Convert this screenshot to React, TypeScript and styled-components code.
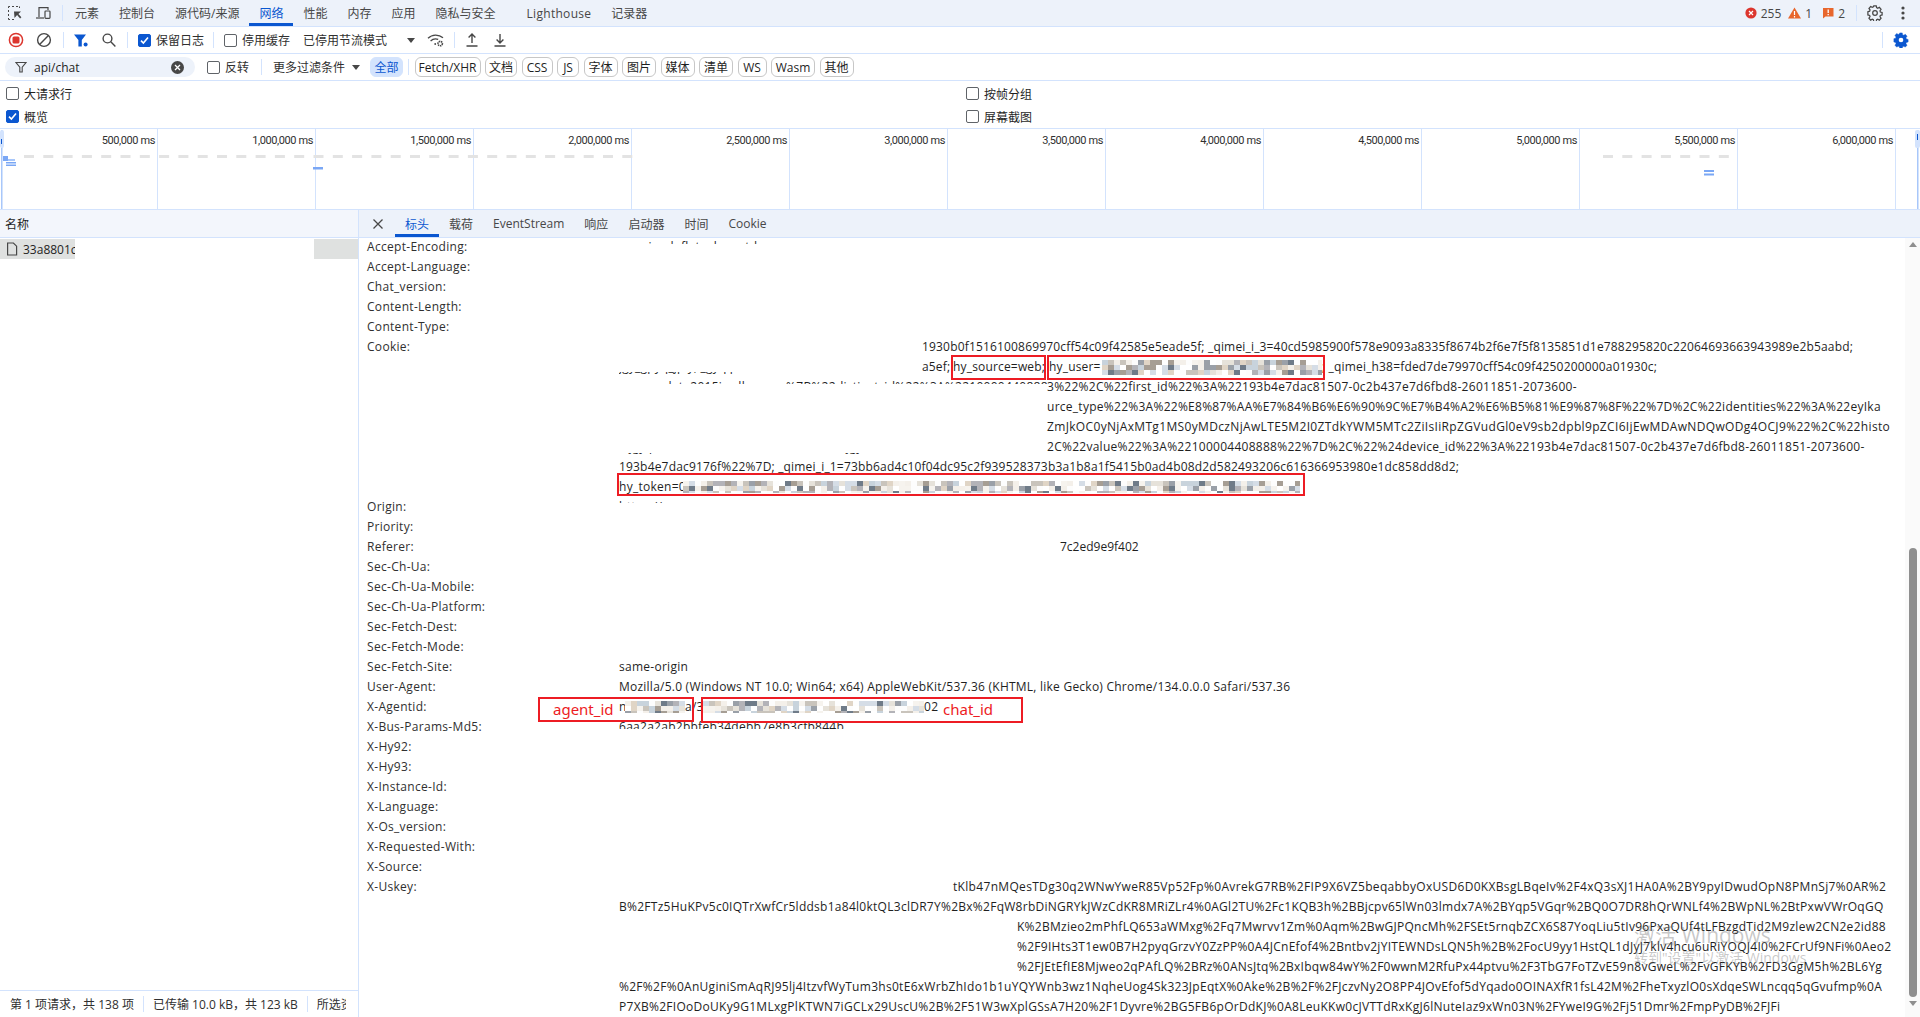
import React from "react";
import styled, { createGlobalStyle } from "styled-components";

const GlobalStyle = createGlobalStyle`
  html, body, #root { margin: 0; padding: 0; height: 100%; overflow: hidden; background: #fff; }
  body { font-family: "Open Sans", "Noto Sans CJK SC", sans-serif; font-size: 12px; color: #1f1f1f; }
`;

const BORDER = "#d3e3fd";
const BAR = "#edf2fa";

const Page = styled.div`
  position: relative;
  height: 1017px;
  display: flex;
  flex-direction: column;
  overflow: hidden;
`;

/* top tab strip */
const MainTabs = styled.div`
  height: 26px;
  flex: none;
  display: flex;
  align-items: stretch;
  background: ${BAR};
  border-bottom: 1px solid ${BORDER};
  padding-left: 1px;
`;
const MainTab = styled.div<{ $active?: boolean; $gap?: number; $ls?: number }>`
  display: flex;
  align-items: center;
  padding: 0 10px;
  margin-left: ${(p) => p.$gap || 0}px;
  letter-spacing: ${(p) => p.$ls || 0}px;
  color: ${(p) => (p.$active ? "#0b57d0" : "#474747")};
  box-shadow: ${(p) => (p.$active ? "inset 0 -3px 0 #0b57d0" : "none")};
  white-space: nowrap;
`;
const IconBtn = styled.div<{ $w?: number; $l?: number }>`
  width: ${(p) => p.$w || 28}px;
  margin-left: ${(p) => p.$l || 0}px;
  flex: none;
  display: flex;
  align-items: center;
  justify-content: center;
`;
const Sep = styled.div<{ $l?: number; $r?: number; $h?: number }>`
  width: 1px;
  height: ${(p) => p.$h || 16}px;
  background: ${BORDER};
  align-self: center;
  flex: none;
  margin-left: ${(p) => p.$l || 0}px;
  margin-right: ${(p) => p.$r || 0}px;
`;
const Spacer = styled.div`
  flex: 1;
`;
const Count = styled.span<{ $l: number }>`
  display: flex;
  align-items: center;
  margin-left: ${(p) => p.$l}px;
  gap: 4px;
  color: #474747;
`;

/* network toolbars */
const ToolRow = styled.div<{ $pad?: number }>`
  height: 26px;
  flex: none;
  display: flex;
  align-items: center;
  border-bottom: 1px solid ${BORDER};
  padding-left: ${(p) => p.$pad || 0}px;
  white-space: nowrap;
`;
const Check = styled.span<{ $on?: boolean; $l?: number }>`
  width: 11px;
  height: 11px;
  flex: none;
  display: inline-flex;
  align-items: center;
  justify-content: center;
  border-radius: 2px;
  margin-left: ${(p) => p.$l || 0}px;
  margin-right: 5px;
  border: 1px solid ${(p) => (p.$on ? "#0b57d0" : "#5f6368")};
  background: ${(p) => (p.$on ? "#0b57d0" : "#fff")};
`;
const ToolText = styled.span<{ $l?: number }>`
  margin-left: ${(p) => p.$l || 0}px;
  color: #303030;
`;
const Caret = styled.span<{ $l: number }>`
  width: 0;
  height: 0;
  margin-left: ${(p) => p.$l}px;
  border-left: 4px solid transparent;
  border-right: 4px solid transparent;
  border-top: 5px solid #474747;
  flex: none;
`;
const FilterBox = styled.div`
  width: 190px;
  height: 20px;
  flex: none;
  display: flex;
  align-items: center;
  border-radius: 10px;
  background: ${BAR};
  padding-left: 10px;
  box-sizing: border-box;
`;
const FilterValue = styled.span`
  margin-left: 7px;
  flex: 1;
  color: #1f1f1f;
`;
const ClearDot = styled.span`
  width: 13px;
  height: 13px;
  border-radius: 50%;
  background: #474747;
  display: flex;
  align-items: center;
  justify-content: center;
  margin-right: 11px;
`;
const Chip = styled.div<{ $on?: boolean; $w: number; $l?: number }>`
  width: ${(p) => p.$w}px;
  height: 20px;
  flex: none;
  box-sizing: border-box;
  margin-left: ${(p) => p.$l ?? 4.5}px;
  display: flex;
  align-items: center;
  justify-content: center;
  border-radius: 6px;
  border: 1px solid ${(p) => (p.$on ? "#d3e3fd" : "#c7c7c7")};
  background: ${(p) => (p.$on ? "#d3e3fd" : "#fff")};
  color: ${(p) => (p.$on ? "#0b57d0" : "#1f1f1f")};
`;

/* options */
const Options = styled.div`
  height: 48px;
  flex: none;
  box-sizing: border-box;
  display: grid;
  grid-template-columns: 960px 1fr;
  grid-auto-rows: 23px;
  align-items: center;
  padding: 1px 0 0 6px;
  border-bottom: 1px solid ${BORDER};
`;
const Option = styled.label`
  display: flex;
  align-items: center;
  color: #1f1f1f;
`;

/* overview chart */
const Overview = styled.div`
  position: relative;
  height: 80px;
  flex: none;
  display: flex;
  border-bottom: 1px solid ${BORDER};
  overflow: hidden;
`;
const Tick = styled.div`
  width: 158px;
  flex: none;
  box-sizing: border-box;
  border-right: 1px solid ${BORDER};
  text-align: right;
  padding: 5px 2px 0 0;
  font-family: Roboto, sans-serif;
  font-size: 11px;
  letter-spacing: -0.4px;
  line-height: 14px;
  color: #303030;
  white-space: nowrap;
`;
const OverviewDraw = styled.svg`
  position: absolute;
  left: 0;
  top: 0;
`;

/* split */
const Split = styled.div`
  flex: 1;
  min-height: 0;
  display: flex;
`;
const LeftPane = styled.div`
  width: 358px;
  flex: none;
  display: flex;
  flex-direction: column;
  border-right: 1px solid ${BORDER};
`;
const NameHead = styled.div`
  height: 27px;
  flex: none;
  display: flex;
  align-items: center;
  padding-left: 5px;
  background: #f3f6fc;
  border-bottom: 1px solid ${BORDER};
  color: #1f1f1f;
`;
const RequestList = styled.div`
  flex: 1;
  padding-top: 1px;
`;
const RequestRow = styled.div`
  height: 20px;
  display: flex;
`;
const RequestName = styled.div`
  width: 75px;
  background: #dfe1e0;
  display: flex;
  align-items: center;
  padding-left: 6px;
  box-sizing: border-box;
  overflow: hidden;
  white-space: nowrap;
  gap: 5px;
`;
const RedactedGap = styled.div`
  width: 239px;
  background: #fff;
`;
const RowRest = styled.div`
  flex: 1;
  background: #dfe1e0;
`;
const StatusBar = styled.div`
  height: 26px;
  flex: none;
  display: flex;
  align-items: center;
  border-top: 1px solid ${BORDER};
  padding-left: 10px;
  white-space: nowrap;
  overflow: hidden;
  color: #303030;
`;
const StatusClip = styled.span`
  width: 29px;
  overflow: hidden;
  flex: none;
`;

const RightPane = styled.div`
  flex: 1;
  min-width: 0;
  display: flex;
  flex-direction: column;
`;
const DetailTabs = styled.div`
  height: 27px;
  flex: none;
  display: flex;
  align-items: stretch;
  background: ${BAR};
  border-bottom: 1px solid ${BORDER};
  padding-left: 5px;
`;
const DetailClose = styled(IconBtn)`
  margin-right: 3px;
`;
const DetailBody = styled.div`
  flex: 1;
  min-height: 0;
  display: flex;
`;
const HeaderList = styled.div`
  position: relative;
  flex: 1;
  min-width: 0;
  margin-top: -1px;
  overflow: hidden;
  padding-left: 8px;
`;
const HeaderRow = styled.div`
  display: flex;
`;
const HeaderName = styled.div`
  width: 252px;
  flex: none;
  line-height: 20px;
  letter-spacing: 0.3px;
  color: #303030;
`;
const HeaderValue = styled.div`
  flex: 1;
  min-width: 0;
`;
const ValueLine = styled.div<{ $indent?: number; $ls?: number }>`
  height: 20px;
  line-height: 20px;
  display: flex;
  align-items: center;
  padding-left: ${(p) => p.$indent || 0}px;
  letter-spacing: ${(p) => p.$ls ?? 0.27}px;
  white-space: pre;
  color: #1f1f1f;
`;
const Seg = styled.span<{ $w: number }>`
  width: ${(p) => p.$w}px;
  flex: none;
  overflow: hidden;
`;
// text mostly hidden under the white redaction, only a sliver of it shows
const Sliver = styled.span<{ $w?: number; $top?: number; $bottom?: number }>`
  ${(p) => (p.$w ? `width: ${p.$w}px; flex: none; overflow: hidden;` : "")}
  height: 20px;
  clip-path: inset(${(p) => p.$top || 0}px 0 ${(p) => p.$bottom || 0}px 0);
`;
const MosaicSvg = styled.svg`
  flex: none;
  display: block;
`;

const RedBox = styled.div<{ $x: number; $y: number; $w: number; $h: number }>`
  position: absolute;
  left: ${(p) => p.$x}px;
  top: ${(p) => p.$y}px;
  width: ${(p) => p.$w}px;
  height: ${(p) => p.$h}px;
  box-sizing: border-box;
  border: 2px solid #ed1c24;
`;
const RedNote = styled.span<{ $x: number }>`
  position: absolute;
  left: ${(p) => p.$x}px;
  top: 0;
  font-size: 15px;
  line-height: 21px;
  color: #ed1c24;
  font-family: "Noto Sans", sans-serif;
`;

const ScrollTrack = styled.div`
  width: 15px;
  flex: none;
  background: #fafafa;
  display: flex;
  flex-direction: column;
  align-items: center;
  padding-top: 4px;
  box-sizing: border-box;
`;
const ArrowUp = styled.div`
  width: 0;
  height: 0;
  flex: none;
  border-left: 4px solid transparent;
  border-right: 4px solid transparent;
  border-bottom: 5px solid #8f8f8f;
`;
const ArrowDown = styled(ArrowUp)`
  border-bottom: 0;
  border-top: 5px solid #8f8f8f;
  margin-top: 4px;
`;
const Thumb = styled.div`
  width: 8px;
  height: 449px;
  flex: none;
  margin-top: 301px;
  border-radius: 4px;
  background: #8f8f8f;
`;

const Watermark = styled.div`
  position: absolute;
  left: 1634px;
  top: 922px;
  color: rgba(110, 110, 110, 0.38);
  pointer-events: none;
  white-space: nowrap;
`;
const WatermarkTitle = styled.div`
  font-size: 21px;
  line-height: 26px;
`;
const WatermarkSub = styled.div`
  font-size: 14px;
  line-height: 20px;
`;

const InspectIcon = () => (
  <svg width="16" height="16" viewBox="0 0 16 16" fill="none" stroke="#474747">
    <path d="M1.500 3V1.500H3M5 1.500h2M9 1.500h2M12.500 1.500v1.500M1.500 5v2M1.500 9v2M1.500 13v1.500H3M5 14.500h2" />
    <path d="M7 6.500l7 0-2.600 2.400 3 3.400-1.300 1.200-3-3.400L7.500 13z" fill="#474747" stroke="none" />
  </svg>
);
const DeviceIcon = () => (
  <svg width="16" height="16" viewBox="0 0 16 16" fill="none" stroke="#474747" strokeWidth="1.200">
    <path d="M4 12V2.600h9V5" />
    <path d="M1 13h8" />
    <rect x="10" y="6" width="5" height="7.400" rx="0.800" />
  </svg>
);
const RecordIcon = () => (
  <svg width="16" height="16" viewBox="0 0 16 16">
    <circle cx="8" cy="8" r="6.600" fill="none" stroke="#dc362e" strokeWidth="1.500" />
    <rect x="4.500" y="4.500" width="7" height="7" rx="1.500" fill="#dc362e" />
  </svg>
);
const ClearIcon = () => (
  <svg width="16" height="16" viewBox="0 0 16 16" fill="none" stroke="#474747" strokeWidth="1.400">
    <circle cx="8" cy="8" r="6.400" />
    <path d="M3.600 12.600l8.800-9.200" />
  </svg>
);
const FunnelIcon = () => (
  <svg width="16" height="16" viewBox="0 0 16 16">
    <path d="M1 2.500h12L8.800 8v6.500h-3.400V8z" fill="#0b57d0" />
    <circle cx="12.600" cy="12.600" r="2" fill="#0b57d0" />
  </svg>
);
const SearchIcon = () => (
  <svg width="16" height="16" viewBox="0 0 16 16" fill="none" stroke="#474747" strokeWidth="1.400">
    <circle cx="6.500" cy="6.500" r="4.400" />
    <path d="M9.800 9.800l4.600 4.800" />
  </svg>
);
const WifiGearIcon = () => (
  <svg width="18" height="16" viewBox="0 0 18 16" fill="none" stroke="#474747" strokeWidth="1.300">
    <path d="M1 6.200a11 11 0 0 1 15-.4M3.600 9a7.200 7.200 0 0 1 7.600-1.600" />
    <circle cx="8.200" cy="12" r="0.900" fill="#474747" stroke="none" />
    <circle cx="13.200" cy="11.600" r="2.200" strokeWidth="1.600" strokeDasharray="1.400 0.600" />
  </svg>
);
const UploadIcon = () => (
  <svg width="16" height="16" viewBox="0 0 16 16" fill="none" stroke="#474747" strokeWidth="1.400">
    <path d="M8 11V2.200M4.600 5.400L8 2l3.400 3.400M2.500 14h11" />
  </svg>
);
const DownloadIcon = () => (
  <svg width="16" height="16" viewBox="0 0 16 16" fill="none" stroke="#474747" strokeWidth="1.400">
    <path d="M8 2v8.800M4.600 7.600L8 11l3.400-3.400M2.500 14h11" />
  </svg>
);
const CloseIcon = () => (
  <svg width="12" height="12" viewBox="0 0 12 12" fill="none" stroke="#474747" strokeWidth="1.300">
    <path d="M1.500 1.500l9 9M10.500 1.500l-9 9" />
  </svg>
);
const GEAR =
  "M6.600 1h2.800l.4 2 1.300.6 1.800-1 1.900 2.200-1.200 1.700.4 1.400 2 .5v2.800l-2 .5-.4 1.400 1.200 1.700-1.900 2.200-1.800-1-1.300.6-.4 2H6.600l-.4-2-1.300-.6-1.800 1-1.900-2.200 1.200-1.700-.4-1.400-2-.5V7.500l2-.5.4-1.400L1.200 3.900l1.900-2.200 1.800 1 1.300-.6z";
const GearIcon = ({ color, solid }: { color: string; solid?: boolean }) => (
  <svg width="16" height="16" viewBox="-1 0 18 18">
    <path d={GEAR} fill={solid ? color : "none"} stroke={color} strokeWidth={solid ? 0.5 : 1.4} />
    <circle cx="8" cy="9" r="2.600" fill={solid ? "#fff" : "none"} stroke={solid ? "none" : color} strokeWidth="1.400" />
  </svg>
);
const DotsIcon = () => (
  <svg width="4" height="14" viewBox="0 0 4 14" fill="#474747">
    <circle cx="2" cy="2" r="1.600" />
    <circle cx="2" cy="7" r="1.600" />
    <circle cx="2" cy="12" r="1.600" />
  </svg>
);
const ErrorIcon = () => (
  <svg width="12" height="12" viewBox="0 0 12 12">
    <circle cx="6" cy="6" r="5.600" fill="#dc362e" />
    <path d="M4 4l4 4M8 4l-4 4" stroke="#fff" strokeWidth="1.200" />
  </svg>
);
const WarnIcon = () => (
  <svg width="13" height="12" viewBox="0 0 13 12">
    <path d="M6.500.5L13 11.500H0z" fill="#e8662c" />
    <path d="M6.500 4v4M6.500 9v1.400" stroke="#fff" strokeWidth="1.200" />
  </svg>
);
const IssueIcon = () => (
  <svg width="11" height="12" viewBox="0 0 11 12">
    <path d="M0 1h10.500v8.500H2.500L0 11.500z" fill="#e8662c" />
    <path d="M5.200 2.500v3.600M5.200 7v1.300" stroke="#fff" strokeWidth="1.300" />
  </svg>
);
const CheckMark = () => (
  <svg width="9" height="9" viewBox="0 0 9 9" fill="none" stroke="#fff" strokeWidth="1.600">
    <path d="M1 4.600l2.400 2.500L8 1.600" />
  </svg>
);
const FileIcon = () => (
  <svg width="12" height="14" viewBox="0 0 12 14" fill="none" stroke="#474747" strokeWidth="1.200" style={{ flex: "none" }}>
    <path d="M1.600 1h5.800L10.600 4.200V13H1.600z" />
  </svg>
);

// pixelated blur over the secret parts of the cookies
const MOSAIC = ["#ffffff", "#f6f3ee", "#ffffff", "#e6e2da", "#d5dde6", "#c9c4bc", "#fdfdfd", "#b3b3b8", "#e0d5c6", "#c8d3dc", "#a69e94", "#9aa0a8", "#f4f0ea", "#6f7b88"];
const Mosaic = ({ w, h, seed }: { w: number; h: number; seed: number }) => {
  const cells: React.ReactNode[] = [];
  for (let y = 0; y < h; y += 5) {
    for (let x = 0; x < w; x += 6) {
      const r = Math.sin(x * 12.9898 + y * 78.233 + seed) * 43758.5453;
      const i = Math.floor((r - Math.floor(r)) * MOSAIC.length);
      cells.push(<rect key={`${x}-${y}`} x={x} y={y} width="6" height="5" fill={MOSAIC[i]} />);
    }
  }
  return (
    <MosaicSvg width={w} height={h} viewBox={`0 0 ${w} ${h}`}>
      {cells}
    </MosaicSvg>
  );
};

const TICKS = ["500,000", "1,000,000", "1,500,000", "2,000,000", "2,500,000", "3,000,000", "3,500,000", "4,000,000", "4,500,000", "5,000,000", "5,500,000", "6,000,000", ""];

const CHIPS: [string, number][] = [
  ["Fetch/XHR", 66],
  ["文档", 32],
  ["CSS", 31],
  ["JS", 22],
  ["字体", 34],
  ["图片", 34],
  ["媒体", 34],
  ["清单", 34],
  ["WS", 29],
  ["Wasm", 44],
  ["其他", 34],
];

const dashes = (from: number, to: number) => {
  const out: React.ReactNode[] = [];
  for (let x = from; x < to; x += 19.3) {
    out.push(<rect key={x} x={x} y="155" width="10" height="3" fill="#e3e3e3" />);
  }
  return out;
};

const NAMES_TOP = ["Sec-Ch-Ua:", "Sec-Ch-Ua-Mobile:", "Sec-Ch-Ua-Platform:", "Sec-Fetch-Dest:", "Sec-Fetch-Mode:"];
const NAMES_BOTTOM = ["X-Hy92:", "X-Hy93:", "X-Instance-Id:", "X-Language:", "X-Os_version:", "X-Requested-With:", "X-Source:"];

const Row = ({ name, children }: { name: string; children?: React.ReactNode }) => (
  <HeaderRow>
    <HeaderName>{name}</HeaderName>
    <HeaderValue>{children || <ValueLine />}</HeaderValue>
  </HeaderRow>
);

export default function App() {
  return (
    <Page>
      <GlobalStyle />
      <MainTabs>
        <IconBtn><InspectIcon /></IconBtn>
        <IconBtn><DeviceIcon /></IconBtn>
        <Sep $l={5} $r={2} />
        <MainTab>元素</MainTab>
        <MainTab>控制台</MainTab>
        <MainTab>源代码/来源</MainTab>
        <MainTab $active>网络</MainTab>
        <MainTab>性能</MainTab>
        <MainTab>内存</MainTab>
        <MainTab>应用</MainTab>
        <MainTab>隐私与安全</MainTab>
        <MainTab $gap={11} $ls={0.3}>Lighthouse</MainTab>
        <MainTab>记录器</MainTab>
        <Spacer />
        <Count $l={0}><ErrorIcon />255</Count>
        <Count $l={7}><WarnIcon />1</Count>
        <Count $l={11}><IssueIcon />2</Count>
        <Sep $l={11} $r={7} />
        <IconBtn $w={22}><GearIcon color="#474747" /></IconBtn>
        <IconBtn $w={34}><DotsIcon /></IconBtn>
      </MainTabs>

      <ToolRow $pad={2}>
        <IconBtn><RecordIcon /></IconBtn>
        <IconBtn><ClearIcon /></IconBtn>
        <Sep $l={5} $r={3} />
        <IconBtn><FunnelIcon /></IconBtn>
        <IconBtn><SearchIcon /></IconBtn>
        <Sep $l={4} />
        <Check $on $l={10}><CheckMark /></Check>
        <ToolText>保留日志</ToolText>
        <Sep $l={9} />
        <Check $l={10} />
        <ToolText>停用缓存</ToolText>
        <ToolText $l={13}>已停用节流模式</ToolText>
        <Caret $l={20} />
        <IconBtn $w={24} $l={9}><WifiGearIcon /></IconBtn>
        <Sep $l={6} $r={3} />
        <IconBtn><UploadIcon /></IconBtn>
        <IconBtn><DownloadIcon /></IconBtn>
        <Spacer />
        <Sep $h={16} $r={6} />
        <IconBtn $w={24}><GearIcon color="#0b57d0" solid /></IconBtn>
        <IconBtn $w={7} />
      </ToolRow>

      <ToolRow $pad={5}>
        <FilterBox>
          <svg width="12" height="12" viewBox="0 0 12 12" fill="none" stroke="#474747" strokeWidth="1.100">
            <path d="M1 1.500h10L7.200 6.200v4.800H4.800V6.200z" />
          </svg>
          <FilterValue>api/chat</FilterValue>
          <ClearDot>
            <svg width="7" height="7" viewBox="0 0 7 7" stroke="#fff" strokeWidth="1.300">
              <path d="M1 1l5 5M6 1l-5 5" />
            </svg>
          </ClearDot>
        </FilterBox>
        <Check $l={12} />
        <ToolText>反转</ToolText>
        <Sep $l={12} />
        <ToolText $l={11}>更多过滤条件</ToolText>
        <Caret $l={7} />
        <Chip $on $w={33} $l={10}>全部</Chip>
        <Sep $l={5} $r={1} />
        {CHIPS.map(([label, w]) => (
          <Chip key={label} $w={w}>{label}</Chip>
        ))}
      </ToolRow>

      <Options>
        <Option><Check />大请求行</Option>
        <Option><Check />按帧分组</Option>
        <Option><Check $on><CheckMark /></Check>概览</Option>
        <Option><Check />屏幕截图</Option>
      </Options>

      <Overview>
        {TICKS.map((t) => (
          <Tick key={t}>{t && `${t} ms`}</Tick>
        ))}
        <OverviewDraw width="1920" height="80" viewBox="0 129 1920 80">
          {dashes(24, 628)}
          {dashes(1603, 1733)}
          <rect x="1" y="130" width="1.500" height="79" fill="#a8c7fa" />
          <rect x="1917" y="130" width="1.500" height="79" fill="#a8c7fa" />
          <rect x="0" y="130" width="4" height="18" rx="2" fill="#d3e3fd" />
          <rect x="1915" y="130" width="5" height="18" rx="2" fill="#d3e3fd" />
          <rect x="1" y="139" width="1" height="5" fill="#0b57d0" />
          <rect x="1917" y="134" width="1" height="6" fill="#0b57d0" />
          <rect x="3" y="156" width="5" height="5" fill="#7aa7f5" />
          <rect x="8" y="159" width="7" height="2" fill="#a8c7fa" />
          <rect x="6" y="162" width="10" height="1.500" fill="#7aa7f5" />
          <rect x="6" y="164.500" width="10" height="1.500" fill="#7aa7f5" />
          <rect x="313" y="167" width="10" height="2.500" fill="#7aa7f5" />
          <rect x="1704" y="170" width="10" height="2" fill="#7aa7f5" />
          <rect x="1704" y="173.500" width="10" height="2" fill="#7aa7f5" />
        </OverviewDraw>
      </Overview>

      <Split>
        <LeftPane>
          <NameHead>名称</NameHead>
          <RequestList>
            <RequestRow>
              <RequestName><FileIcon />33a8801c</RequestName>
              <RedactedGap />
              <RowRest />
            </RequestRow>
          </RequestList>
          <StatusBar>
            第 1 项请求，共 138 项
            <Sep $l={9} $r={9} />
            已传输 10.0 kB，共 123 kB
            <Sep $l={9} $r={9} />
            <StatusClip>所选资源</StatusClip>
          </StatusBar>
        </LeftPane>

        <RightPane>
          <DetailTabs>
            <DetailClose><CloseIcon /></DetailClose>
            <MainTab $active>标头</MainTab>
            <MainTab>载荷</MainTab>
            <MainTab>EventStream</MainTab>
            <MainTab>响应</MainTab>
            <MainTab>启动器</MainTab>
            <MainTab>时间</MainTab>
            <MainTab>Cookie</MainTab>
          </DetailTabs>
          <DetailBody>
            <HeaderList>
              <Row name="Accept-Encoding:">
                <ValueLine><Sliver $bottom={13}>{"     gzip, deflate, br, zstd"}</Sliver></ValueLine>
              </Row>
              <Row name="Accept-Language:" />
              <Row name="Chat_version:" />
              <Row name="Content-Length:" />
              <Row name="Content-Type:" />
              <Row name="Cookie:">
                <ValueLine $indent={303} $ls={0.17}>1930b0f1516100869970cff54c09f42585e5eade5f; _qimei_i_3=40cd5985900f578e9093a8335f8674b2f6e7f5f8135851d1e788295820c22064693663943989e2b5aabd;</ValueLine>
                <ValueLine $ls={0.17}>
                  <Sliver $w={303} $top={15}>jgy_gpyq_jp y; _gyq p</Sliver>
                  <Seg $w={31}>a5ef;</Seg>
                  <Seg $w={96}>hy_source=web;</Seg>
                  <Seg $w={53}>hy_user=</Seg>
                  <Mosaic w={220} h={15} seed={17} />
                  <span>; _qimei_h38=fded7de79970cff54c09f4250200000a01930c;</span>
                </ValueLine>
                <ValueLine>
                  <Sliver $w={428} $bottom={13}>sensorsdata2015jssdkcross=%7B%22distinct_id%22%3A%22100004408888</Sliver>
                  <span>3%22%2C%22first_id%22%3A%22193b4e7dac81507-0c2b437e7d6fbd8-26011851-2073600-</span>
                </ValueLine>
                <ValueLine $indent={428}>urce_type%22%3A%22%E8%87%AA%E7%84%B6%E6%90%9C%E7%B4%A2%E6%B5%81%E9%87%8F%22%7D%2C%22identities%22%3A%22eyIka</ValueLine>
                <ValueLine $indent={428} $ls={0.34}>ZmJkOC0yNjAxMTg1MS0yMDczNjAwLTE5M2I0ZTdkYWM5MTc2ZiIsIiRpZGVudGl0eV9sb2dpbl9pZCI6IjEwMDAwNDQwODg4OCJ9%22%2C%22histo</ValueLine>
                <ValueLine>
                  <Sliver $w={428} $top={16}>{"   jgy p                                                        jgy"}</Sliver>
                  <span>2C%22value%22%3A%22100004408888%22%7D%2C%22%24device_id%22%3A%22193b4e7dac81507-0c2b437e7d6fbd8-26011851-2073600-</span>
                </ValueLine>
                <ValueLine $ls={0.18}>193b4e7dac9176f%22%7D; _qimei_i_1=73bb6ad4c10f04dc95c2f939528373b3a1b8a1f5415b0ad4b08d2d582493206c616366953980e1dc858dd8d2;</ValueLine>
                <ValueLine>
                  <Seg $w={64}>hy_token=0</Seg>
                  <Mosaic w={617} h={12} seed={53} />
                </ValueLine>
              </Row>
              <Row name="Origin:">
                <ValueLine><Sliver $bottom={14}>https://yuan</Sliver></ValueLine>
              </Row>
              <Row name="Priority:" />
              <Row name="Referer:">
                <ValueLine $indent={441} $ls={0}>7c2ed9e9f402</ValueLine>
              </Row>
              {NAMES_TOP.map((n) => (
                <Row key={n} name={n} />
              ))}
              <Row name="Sec-Fetch-Site:">
                <ValueLine>same-origin</ValueLine>
              </Row>
              <Row name="User-Agent:">
                <ValueLine $ls={0.235}>Mozilla/5.0 (Windows NT 10.0; Win64; x64) AppleWebKit/537.36 (KHTML, like Gecko) Chrome/134.0.0.0 Safari/537.36</ValueLine>
              </Row>
              <Row name="X-Agentid:">
                <ValueLine>
                  <Seg $w={6}>n</Seg>
                  <Mosaic w={60} h={12} seed={91} />
                  <Seg $w={18}>a/3</Seg>
                  <Mosaic w={221} h={12} seed={29} />
                  <span>02</span>
                </ValueLine>
              </Row>
              <Row name="X-Bus-Params-Md5:">
                <ValueLine><Sliver $bottom={8}>6aa2a2ab2bbfeb34debb7e8b3cfb844b</Sliver></ValueLine>
              </Row>
              {NAMES_BOTTOM.map((n) => (
                <Row key={n} name={n} />
              ))}
              <Row name="X-Uskey:">
                <ValueLine $indent={334} $ls={0.32}>tKlb47nMQesTDg30q2WNwYweR85Vp52Fp%0AvrekG7RB%2FIP9X6VZ5beqabbyOxUSD6D0KXBsgLBqeIv%2F4xQ3sXJ1HA0A%2BY9pyIDwudOpN8PMnSj7%0AR%2</ValueLine>
                <ValueLine>B%2FTz5HuKPv5c0IQTrXwfCr5lddsb1a84l0ktQL3clDR7Y%2Bx%2FqW8rbDiNGRYkJWzCdKR8MRiZLr4%0AGl2TU%2Fc1KQB3h%2BBjcpv65lWn03lmdx7A%2BYqp5VGqr%2BQ0O7DR8hQrWNLf4%2BWpNL%2BtPxwVWrOqGQ</ValueLine>
                <ValueLine $indent={398}>K%2BMzieo2mPhfLQ653aWMxg%2Fq7Mwrvv1Zm%0Aqm%2BwGJPQncMh%2FSEt5rnqbZCX6S87YoqLiu5tIv96PxaQUf4tLFBzgdTid2M9zlew2CN2e2id88</ValueLine>
                <ValueLine $indent={398}>%2F9IHts3T1ew0B7H2pyqGrzvY0ZzPP%0A4JCnEfof4%2Bntbv2jYITEWNDsLQN5h%2B%2FocU9yy1HstQL1dJyJ7klv4hcu6uRiYOQJ4I0%2FCrUf9NFi%0Aeo2</ValueLine>
                <ValueLine $indent={398}>%2FJEtEfIE8Mjweo2qPAfLQ%2BRz%0ANsJtq%2BxIbqw84wY%2F0wwnM2RfuPx44ptvu%2F3TbG7FoTZvE59n8vGweL%2FvGFKYB%2FD3GgM5h%2BL6Yg</ValueLine>
                <ValueLine $ls={0.29}>%2F%2F%0AnUginiSmAqRJ95lj4ItzvfWyTum3hs0tE6xWrbZhIdo1b1uYQYWnb3wz1NqheUog4Sk323JpEqtX%0Ake%2B%2F%2FJczvNy2O8PP4JOvEfof5dYqado0OINAXfR1fsL42M%2FheTxyzlO0sXdqeSWLncqq5qGvufmp%0A</ValueLine>
                <ValueLine $ls={0.29}>P7XB%2FIOoDoUKy9G1MLxgPlKTWN7iGCLx29UscU%2B%2F51W3wXplGSsA7H20%2F1Dyvre%2BG5FB6pOrDdKJ%0A8LeuKKw0cJVTTdRxKgJ6lNuteIaz9xWn03N%2FYweI9G%2Fj51Dmr%2FmpPyDB%2FJFi</ValueLine>
              </Row>

              <RedBox $x={592} $y={118} $w={95} $h={25} />
              <RedBox $x={688} $y={118} $w={278} $h={25} />
              <RedBox $x={258} $y={236} $w={688} $h={23} />
              <RedBox $x={179} $y={460} $w={156} $h={25}>
                <RedNote $x={13}>agent_id</RedNote>
              </RedBox>
              <RedBox $x={342} $y={460} $w={322} $h={26}>
                <RedNote $x={240}>chat_id</RedNote>
              </RedBox>
            </HeaderList>
            <ScrollTrack>
              <ArrowUp />
              <Thumb />
              <ArrowDown />
            </ScrollTrack>
          </DetailBody>
        </RightPane>
      </Split>

      <Watermark>
        <WatermarkTitle>激活 Windows</WatermarkTitle>
        <WatermarkSub>转到"设置"以激活 Windows</WatermarkSub>
      </Watermark>
    </Page>
  );
}
